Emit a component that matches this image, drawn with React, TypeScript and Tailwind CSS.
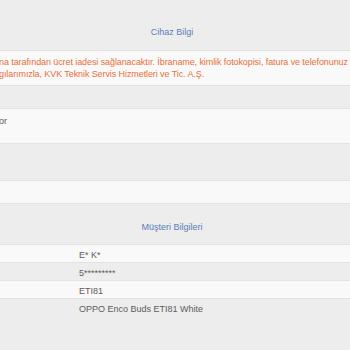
import React from "react";

type Row = {
  value?: string;
  height: string;
  striped: boolean;
};

const customerRows: Row[] = [
  { value: "E* K*", height: "h-[18px]", striped: false },
  { value: "5*********", height: "h-[18px]", striped: true },
  { value: "ETI81", height: "h-[18px]", striped: false },
  { value: "OPPO Enco Buds ETI81 White", height: "h-[53px]", striped: true },
];

const SectionHeader = ({ title, height }: { title: string; height: string }) => (
  <div
    className={`${height} flex items-end justify-center pr-[6px] pb-[11px] border-t border-[#e3e3e3] text-[#5580b7]`}
  >
    {title}
  </div>
);

const App = () => {
  return (
    <div className="w-[350px] h-[350px] overflow-hidden bg-[#ededed] font-['Liberation_Sans',Arial,sans-serif] text-[9px] leading-[12px] text-[#5c5c5c]">
      {/* device info */}
      <div className="h-[50px] flex items-end justify-center pr-[6px] pb-[12px] text-[#5580b7]">
        Cihaz Bilgi
      </div>

      {/* notice */}
      <div className="h-[35px] bg-[#f9f9f9] border-t border-[#e3e3e3] pt-[5px] whitespace-nowrap tracking-[-0.09px] text-[#e8703a]">
        <p className="-ml-[1px]">
          na tarafından ücret iadesi sağlanacaktır. İbraname, kimlik fotokopisi, fatura ve telefonunuz
        </p>
        <p className="-ml-[1px]">gılarımızla, KVK Teknik Servis Hizmetleri ve Tic. A.Ş.</p>
      </div>

      <div className="h-[23px] border-t border-[#e3e3e3]" />

      <div className="h-[35px] bg-[#f9f9f9] border-t border-[#e3e3e3] pt-[6px]">
        <p className="-ml-[1px]">or</p>
      </div>

      <div className="h-[37px] border-t border-[#e3e3e3]" />
      <div className="h-[23px] bg-[#f9f9f9] border-t border-[#e3e3e3]" />

      {/* customer info */}
      <SectionHeader title="Müşteri Bilgileri" height="h-[41px]" />

      {customerRows.map((row, index) => (
        <div
          key={index}
          className={`${row.height} border-t border-[#e3e3e3] pl-[79px] pt-[4px] ${
            row.striped ? "bg-[#ededed]" : "bg-[#f9f9f9]"
          }`}
        >
          {row.value}
        </div>
      ))}
    </div>
  );
};

export default App;
